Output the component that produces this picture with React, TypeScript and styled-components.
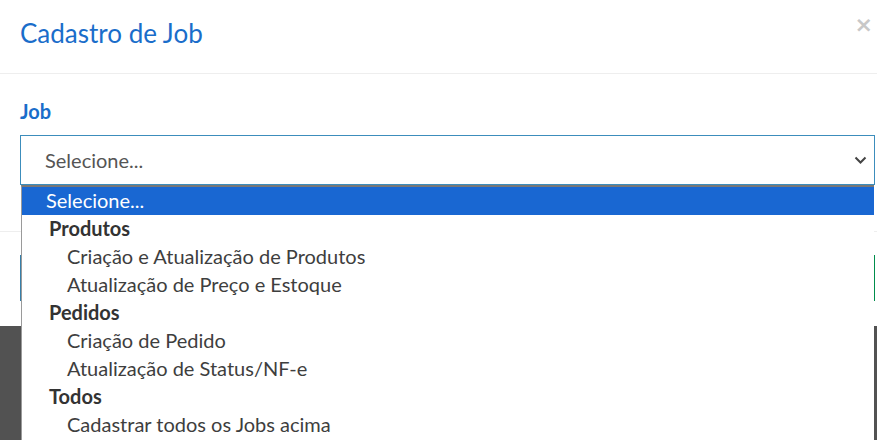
import React from 'react';
import styled, { createGlobalStyle } from 'styled-components';

const GlobalStyle = createGlobalStyle`
  body {
    margin: 0;
    padding: 0;
    background: #525252;
    font-family: Lato, 'Liberation Sans', sans-serif;
  }
`;

type Option = { label: string; group?: boolean };

const options: Option[] = [
  { label: 'Produtos', group: true },
  { label: 'Criação e Atualização de Produtos' },
  { label: 'Atualização de Preço e Estoque' },
  { label: 'Pedidos', group: true },
  { label: 'Criação de Pedido' },
  { label: 'Atualização de Status/NF-e' },
  { label: 'Todos', group: true },
  { label: 'Cadastrar todos os Jobs acima' },
];

function App() {
  return (
    <Page>
      <GlobalStyle />
      <Modal>
        <Header>
          <Title>Cadastro de Job</Title>
          <Close>×</Close>
        </Header>
        <Body>
          <Label>Job</Label>
          <SelectWrap>
            <SelectBox>
              <span>Selecione...</span>
              <svg width="13" height="9" viewBox="0 0 13 9">
                <path d="M1.5 1.5 L6.5 6.5 L11.5 1.5" fill="none" stroke="#444" strokeWidth="2" />
              </svg>
            </SelectBox>
            <Popup>
              <Item $selected>Selecione...</Item>
              {options.map((o) => (
                <Item key={o.label} $group={o.group} $child={!o.group}>
                  {o.label}
                </Item>
              ))}
            </Popup>
          </SelectWrap>
        </Body>
        <Footer>
          <Button $variant="default">Fechar</Button>
          <Button $variant="success">Salvar</Button>
        </Footer>
      </Modal>
    </Page>
  );
}

const Page = styled.div`
  height: 440px;
  background: #525252;
`;

const Modal = styled.div`
  background: #fff;
  width: 877px;
`;

const Header = styled.div`
  display: flex;
  justify-content: space-between;
  align-items: flex-start;
  height: 74px;
  box-sizing: border-box;
  padding: 17px 4px 0 20px;
  border-bottom: 1px solid #eeeeee;
`;

const Title = styled.h4`
  margin: 0;
  font-size: 26px;
  font-weight: 400;
  line-height: 32px;
  color: #1a6dca;
`;

const Close = styled.span`
  font-family: 'DejaVu Sans', sans-serif;
  font-size: 22px;
  font-weight: 700;
  line-height: 16px;
  color: #c8c8c8;
`;

const Body = styled.div`
  padding: 26px 2px 46px 20px;
`;

const Label = styled.div`
  font-size: 20px;
  font-weight: 700;
  line-height: 22px;
  color: #1a6dca;
  margin-bottom: 13px;
`;

const SelectWrap = styled.div`
  position: relative;
  z-index: 10;
`;

const SelectBox = styled.div`
  display: flex;
  align-items: center;
  justify-content: space-between;
  height: 50px;
  box-sizing: border-box;
  border: 1px solid #3c8dbc;
  padding: 0 7px 0 24px;
  font-size: 20px;
  color: #555;
`;

const Popup = styled.div`
  position: absolute;
  top: 50px;
  left: 1px;
  right: 1px;
  padding-bottom: 20px;
  background: #fff;
  border-left: 1px solid #9a9a9a;
  border-top: 2px solid #777;
`;

const Item = styled.div<{ $selected?: boolean; $group?: boolean; $child?: boolean }>`
  height: 28px;
  line-height: 27px;
  padding-left: ${(p) => (p.$child ? 45 : p.$group ? 27 : 24)}px;
  font-size: 20px;
  font-weight: ${(p) => (p.$group ? 700 : 400)};
  color: ${(p) => (p.$selected ? '#fff' : p.$group ? '#333' : '#3e3e3e')};
  background: ${(p) => (p.$selected ? '#1967d2' : 'transparent')};
  white-space: nowrap;
`;

const Footer = styled.div`
  display: flex;
  justify-content: space-between;
  padding: 23px 2px 25px 20px;
  border-top: 1px solid #eeeeee;
`;

const Button = styled.button<{ $variant: 'default' | 'success' }>`
  height: 46px;
  padding: 0 20px;
  font-family: inherit;
  font-size: 18px;
  color: #fff;
  border: 1px solid ${(p) => (p.$variant === 'success' ? '#008d4c' : '#367fa9')};
  background: ${(p) => (p.$variant === 'success' ? '#00a65a' : '#3c8dbc')};
  border-left-width: ${(p) => (p.$variant === 'success' ? 1 : 2)}px;
  border-right-width: ${(p) => (p.$variant === 'success' ? 2 : 1)}px;
`;

export default App;
